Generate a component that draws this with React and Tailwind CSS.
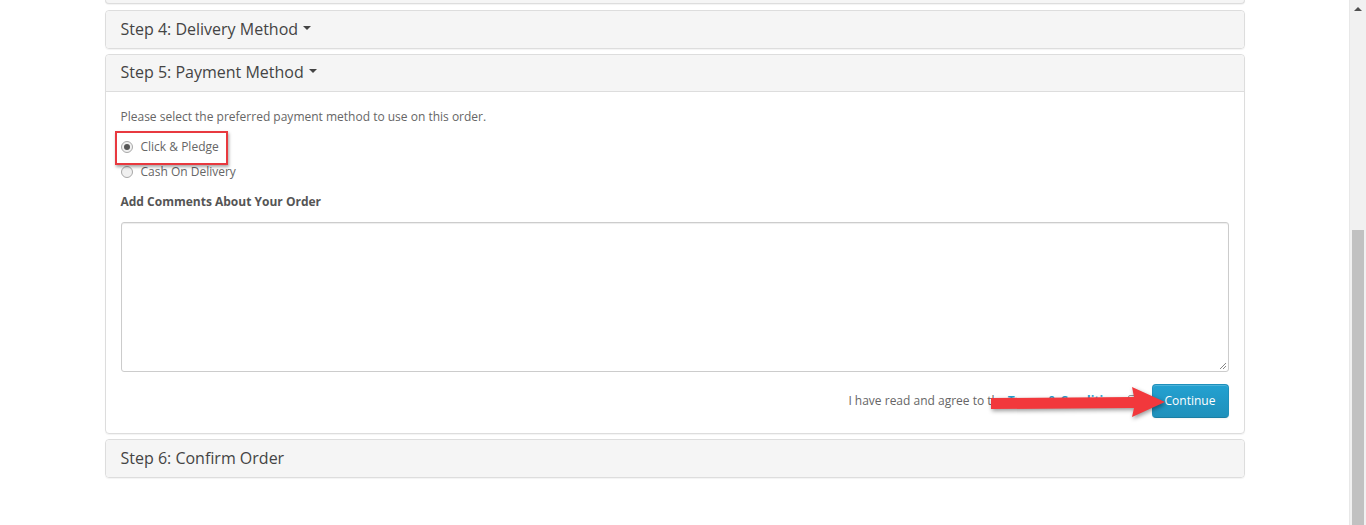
import React from "react";

function Caret() {
  return (
    <span className="inline-block ml-[5px] align-middle w-0 h-0 border-t-[4px] border-t-[#444] border-x-[4px] border-x-transparent relative top-[-1px]" />
  );
}

function Heading({ children, caret, bottom }) {
  return (
    <div
      className={
        "bg-[#f5f5f5] px-[15px] h-[37px] pb-[2px] flex items-center text-[16px] text-[#444] " +
        (bottom ? "border-b border-[#ddd] rounded-t-[4px]" : "rounded-[4px]")
      }
    >
      <span>{children}</span>
      {caret && <Caret />}
    </div>
  );
}

export default function App() {
  return (
    <div
      className="flex h-[525px] w-[1366px] overflow-hidden bg-white"
      style={{ fontFamily: "'Open Sans', 'Noto Sans', Arial, sans-serif" }}
    >
      <div className="flex-1 flex justify-center">
        <div className="w-[1140px] flex flex-col">
          <div className="h-[4px] bg-[#f5f5f5] border-x border-b border-[#ddd] rounded-b-[4px] shadow-[0_1px_1px_rgba(0,0,0,0.05)]" />
          <div className="mt-[6px] border border-[#ddd] rounded-[4px] shadow-[0_1px_1px_rgba(0,0,0,0.05)]">
            <Heading caret>Step 4: Delivery Method</Heading>
          </div>
          <div className="mt-[5px] border border-[#ddd] rounded-[4px] shadow-[0_1px_1px_rgba(0,0,0,0.05)]">
            <Heading caret bottom>Step 5: Payment Method</Heading>
            <div className="px-[15px] pt-[15px] pb-[15px] text-[12px] text-[#666] leading-[20px]">
              <p>Please select the preferred payment method to use on this order.</p>
              <div className="mt-[10px] h-[20px] flex items-center relative">
                <div className="absolute left-[-6px] top-[-6px] w-[113px] h-[34px] border-2 border-[#e8393f] shadow-[1px_2px_3px_rgba(0,0,0,0.35)] pointer-events-none" />
                <span className="w-[12px] h-[12px] rounded-full border border-[#a8a8a8] bg-[#f0f0f0] flex items-center justify-center">
                  <span className="w-[6px] h-[6px] rounded-full bg-[#555]" />
                </span>
                <span className="ml-[8px]">Click &amp; Pledge</span>
              </div>
              <div className="mt-[5px] h-[20px] flex items-center">
                <span className="w-[12px] h-[12px] rounded-full border border-[#a8a8a8] bg-[#f0f0f0]" />
                <span className="ml-[8px]">Cash On Delivery</span>
              </div>
              <div className="mt-[10px] font-bold text-[#555]">Add Comments About Your Order</div>
              <div className="mt-[10px] h-[150px] border border-[#ccc] rounded-[3px] shadow-[inset_0_1px_1px_rgba(0,0,0,0.075)] relative">
                <svg className="absolute right-[1px] bottom-[1px]" width="9" height="9" viewBox="0 0 9 9">
                  <path d="M8 2 L2 8 M8 5 L5 8" stroke="#888" strokeWidth="1" />
                </svg>
              </div>
              <div className="mt-[12px] flex justify-end items-center relative">
                <span>I have read and agree to the </span>
                <a className="ml-[2px] font-bold text-[#23a1d1]">Terms &amp; Conditions</a>
                <span className="ml-[3px] w-[13px] h-[13px] border border-[#999] rounded-[2px] bg-[#f5f5f5]" />
                <button className="ml-[11px] w-[77px] h-[34px] rounded-[4px] border border-[#1f90bb] border-b-[#1a7ea3] text-white text-[12px] bg-gradient-to-b from-[#23a1d1] to-[#1f90bb] shadow-[inset_0_1px_0_rgba(255,255,255,0.2),0_1px_2px_rgba(0,0,0,0.05)]">
                  Continue
                </button>
                <svg className="absolute right-[62px] top-[1px] drop-shadow-[1px_2px_2px_rgba(0,0,0,0.4)]" width="180" height="34" viewBox="0 0 180 34">
                  <path d="M4 13 L147 12 L145 2 L178 17 L145 32 L147 23 L4 24 Z" fill="#f2383c" />
                </svg>
              </div>
            </div>
          </div>
          <div className="mt-[5px] border border-[#ddd] rounded-[4px] shadow-[0_1px_1px_rgba(0,0,0,0.05)]">
            <Heading>Step 6: Confirm Order</Heading>
          </div>
        </div>
      </div>
      <div className="w-[17px] h-[525px] bg-[#f1f1f1] border-l border-[#e8e8e8] flex flex-col">
        <div className="h-[17px] flex items-center justify-center">
          <span className="w-0 h-0 border-b-[4px] border-b-[#505050] border-x-[4px] border-x-transparent" />
        </div>
        <div className="mt-[213px] mx-[2px] flex-1 bg-[#c1c1c1]" />
      </div>
    </div>
  );
}
